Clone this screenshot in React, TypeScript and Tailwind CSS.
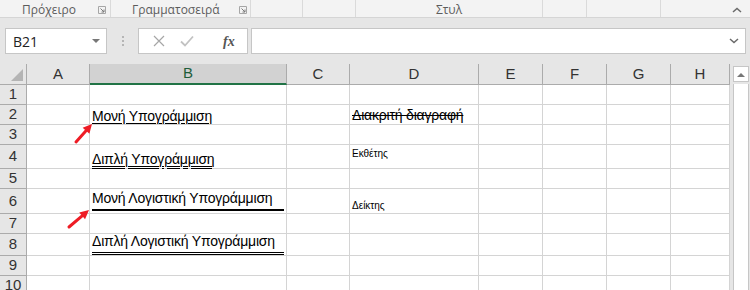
import React from "react";

const cols = [
  { key: "A", w: 63 },
  { key: "B", w: 197 },
  { key: "C", w: 63 },
  { key: "D", w: 129 },
  { key: "E", w: 64 },
  { key: "F", w: 64 },
  { key: "G", w: 64 },
  { key: "H", w: 59 },
];

const rowHeights = [20, 20, 20, 24, 20, 25, 20, 22, 20, 20];

function Launcher({ className }: { className?: string }) {
  return (
    <svg width="8" height="8" viewBox="0 0 8 8" className={className}>
      <path d="M0.5 0.5 H7.5 V7.5 H0.5 Z" fill="none" stroke="#a6a6a6" strokeWidth="1" />
      <path d="M2.5 2.5 L6 6 M3.5 6 H6 V3.5" fill="none" stroke="#7a7a7a" strokeWidth="1" />
    </svg>
  );
}

function Cell({ row, col }: { row: number; col: string }) {
  const base = "text-[14px] text-black leading-none whitespace-nowrap tracking-[-0.2px]";
  if (col === "B") {
    if (row === 2)
      return (
        <span className={`${base} underline decoration-1 underline-offset-2 pl-[2px] mb-[1px]`}>
          Μονή Υπογράμμιση
        </span>
      );
    if (row === 4)
      return (
        <span className={`${base} underline decoration-double decoration-1 underline-offset-2 pl-[2px] mb-[2px]`}>
          Διπλή Υπογράμμιση
        </span>
      );
    if (row === 6)
      return (
        <div className="ml-[2px] mb-[2px] w-[192px] leading-none border-b-[2px] border-black pb-[3px]">
          <span className={base}>Μονή Λογιστική Υπογράμμιση</span>
        </div>
      );
    if (row === 8)
      return (
        <div className="ml-[2px] w-[192px] leading-none border-b-[3px] border-double border-black pb-[3px]">
          <span className={base}>Διπλή Λογιστική Υπογράμμιση</span>
        </div>
      );
  }
  if (col === "D") {
    if (row === 2)
      return <span className={`${base} line-through pl-[2px] mb-[2px]`}>Διακριτή διαγραφή</span>;
    if (row === 4)
      return (
        <span className="text-[10px] text-black leading-none pl-[2px] self-start mt-[4px]">
          Εκθέτης
        </span>
      );
    if (row === 6)
      return (
        <span className="text-[10px] text-black leading-none pl-[2px] mb-[2px]">Δείκτης</span>
      );
  }
  return null;
}

function Arrow({ x1, y1, x2, y2 }: { x1: number; y1: number; x2: number; y2: number }) {
  const dx = x2 - x1;
  const dy = y2 - y1;
  const len = Math.sqrt(dx * dx + dy * dy);
  const ux = dx / len;
  const uy = dy / len;
  const hl = 9;
  const hw = 4.5;
  const bx = x2 - ux * hl;
  const by = y2 - uy * hl;
  const p1 = `${bx - uy * hw},${by + ux * hw}`;
  const p2 = `${bx + uy * hw},${by - ux * hw}`;
  return (
    <g>
      <line x1={x1} y1={y1} x2={bx} y2={by} stroke="#ee1c25" strokeWidth="3" strokeLinecap="round" />
      <polygon points={`${x2},${y2} ${p1} ${p2}`} fill="#ee1c25" />
    </g>
  );
}

export default function App() {
  return (
    <div
      className="relative w-[750px] h-[290px] overflow-hidden bg-[#e6e6e6]"
      style={{ fontFamily: '"Liberation Sans", Arial, sans-serif' }}
    >
      {/* Ribbon group labels */}
      <div
        className="flex items-center h-[18px] bg-[#f3f3f3] border-b border-[#d5d5d5] text-[12px] text-[#5c5c5c]"
        style={{ fontFamily: '"Open Sans", "Noto Sans", sans-serif' }}
      >
        <div className="w-[111px] h-full flex items-center border-r border-[#dadada] relative">
          <span className="ml-[22px] mt-[2px]">Πρόχειρο</span>
          <Launcher className="absolute left-[98px] top-[6px]" />
        </div>
        <div className="w-[140px] h-full flex items-center border-r border-[#dadada] relative">
          <span className="ml-[21px] mt-[2px]">Γραμματοσειρά</span>
          <Launcher className="absolute left-[128px] top-[6px]" />
        </div>
        <div className="w-[52px] h-full border-r border-[#dadada]" />
        <div className="w-[53px] h-full border-r border-[#dadada]" />
        <div className="w-[187px] h-full border-r border-[#dadada] flex items-center justify-center">
          <span className="mt-[3px]">Στυλ</span>
        </div>
        <div className="w-[44px] h-full border-r border-[#dadada]" />
        <div className="w-[74px] h-full border-r border-[#dadada]" />
        <div className="flex-1 h-full flex items-center justify-end pr-[8px]">
          <svg width="10" height="6" viewBox="0 0 10 6" className="mt-[2px]">
            <path d="M1 5 L5 1.5 L9 5" fill="none" stroke="#6a6a6a" strokeWidth="1.5" />
          </svg>
        </div>
      </div>

      {/* Formula bar */}
      <div className="flex items-center h-[46px] pl-[5px] pr-[4px]">
        <div className="w-[102px] h-[26px] bg-white border border-[#c6c6c6] flex items-center justify-between pl-[7px] pr-[6px]">
          <span className="text-[14px] text-[#222]" style={{ fontFamily: '"Open Sans", sans-serif' }}>
            B21
          </span>
          <svg width="8" height="5" viewBox="0 0 8 5">
            <path d="M0 0 H8 L4 4 Z" fill="#777" />
          </svg>
        </div>
        <div className="w-[31px] flex flex-col items-center gap-[2px]">
          <div className="w-[2px] h-[2px] bg-[#b5b5b5]" />
          <div className="w-[2px] h-[2px] bg-[#b5b5b5]" />
          <div className="w-[2px] h-[2px] bg-[#b5b5b5]" />
        </div>
        <div className="w-[110px] h-[26px] bg-white border border-[#c6c6c6] flex items-center">
          <svg width="12" height="12" viewBox="0 0 12 12" className="ml-[14px]">
            <path d="M1 1 L11 11 M11 1 L1 11" stroke="#a6a6a6" strokeWidth="1.2" />
          </svg>
          <svg width="14" height="12" viewBox="0 0 14 12" className="ml-[15px]">
            <path d="M1 6.5 L5 10.5 L13 1.5" fill="none" stroke="#c2c2c2" strokeWidth="1.8" />
          </svg>
          <span
            className="ml-[29px] text-[14px] italic text-[#555] font-bold"
            style={{ fontFamily: '"Liberation Serif", serif' }}
          >
            fx
          </span>
        </div>
        <div className="ml-[3px] flex-1 h-[26px] bg-white border border-[#c6c6c6] flex items-center justify-end pr-[6px]">
          <svg width="10" height="6" viewBox="0 0 10 6">
            <path d="M1 1 L5 4.5 L9 1" fill="none" stroke="#6a6a6a" strokeWidth="1.5" />
          </svg>
        </div>
      </div>

      {/* Grid + scrollbar */}
      <div className="flex">
        <div className="flex flex-col bg-white">
          {/* Column headers */}
          <div className="flex h-[21px] bg-[#e6e6e6]">
            <div className="w-[27px] h-full border-r border-b border-[#ababab] relative">
              <svg width="12" height="12" viewBox="0 0 12 12" className="absolute right-[3px] bottom-[3px]">
                <path d="M12 0 L12 12 L0 12 Z" fill="#b4b4b4" />
              </svg>
            </div>
            {cols.map((c) => (
              <div
                key={c.key}
                className={
                  c.key === "B"
                    ? "h-full flex items-center justify-center bg-[#d2d2d2] border-r border-[#ababab] border-b-2 border-b-[#217346] text-[#1e5e3b] text-[15px]"
                    : "h-full flex items-center justify-center border-r border-b border-[#ababab] text-[#333] text-[15px]"
                }
                style={{ width: c.w }}
              >
                {c.key}
              </div>
            ))}
          </div>
          {rowHeights.map((h, i) => (
            <div key={i} className="flex" style={{ height: h }}>
              <div className="w-[27px] h-full bg-[#e6e6e6] border-r border-b border-[#ababab] flex items-center justify-center text-[15px] text-[#333]">
                {i + 1}
              </div>
              {cols.map((c) => (
                <div
                  key={c.key}
                  className="h-full border-r border-b border-[#d4d4d4] flex items-end overflow-visible"
                  style={{ width: c.w }}
                >
                  <Cell row={i + 1} col={c.key} />
                </div>
              ))}
            </div>
          ))}
        </div>
        <div className="w-[3px]" />
        <div className="w-[16px] flex flex-col mt-[2px]">
          <div className="h-[16px] bg-white border border-[#c6c6c6] flex items-center justify-center">
            <svg width="8" height="5" viewBox="0 0 8 5">
              <path d="M0 5 H8 L4 1 Z" fill="#777" />
            </svg>
          </div>
          <div className="flex-1 bg-white border-x border-[#c6c6c6] mt-[2px] h-[240px]" />
        </div>
      </div>

      {/* annotation arrows */}
      <svg className="absolute left-0 top-0 pointer-events-none" width="750" height="290">
        <Arrow x1={76} y1={142} x2={92} y2={124} />
        <Arrow x1={69} y1={227} x2={89} y2={210} />
      </svg>
    </div>
  );
}
